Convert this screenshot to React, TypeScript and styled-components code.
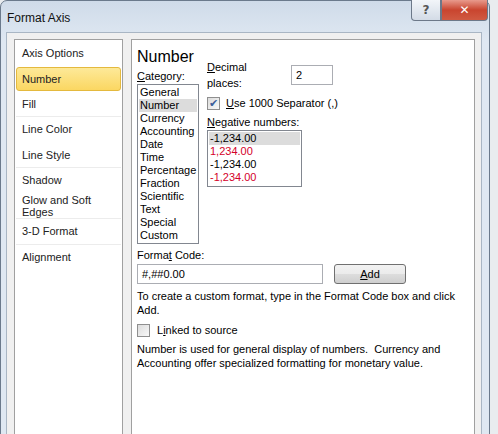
import React from "react";
import styled, { createGlobalStyle } from "styled-components";

const G = createGlobalStyle`
  body { margin:0; background:#e9ecef; font-family:"Liberation Sans",Arial,sans-serif; font-size:11px; color:#000; overflow:hidden; }
`;
const Win = styled.div`
  width:490px; height:440px; background:linear-gradient(#cfdbe9,#dfe8f2 40px,#dfe8f2);
  border:1px solid #6b7a8c; border-radius:7px 7px 0 0; box-sizing:border-box;
  display:flex; flex-direction:column; padding:0 7px 0 5px;
`;
const TitleBar = styled.div`
  height:31px; display:flex; align-items:flex-start; justify-content:space-between;
`;
const Title = styled.div` font-size:12px; padding:10px 0 0 1px; color:#111; `;
const Btns = styled.div` display:flex; margin-top:-1px; margin-right:-6px;`;
const Btn = styled.div<{ red?: boolean }>`
  width:${p => (p.red ? 45 : 28)}px; height:20px; border:1px solid #6c7889; border-top:none;
  border-radius:${p => (p.red ? "0 0 4px 0" : "0 0 0 4px")};
  background:${p => (p.red ? "linear-gradient(#e89a8c,#c9452f 50%,#d05a42)" : "linear-gradient(#f2f5f9,#d3dbe6)")};
  color:${p => (p.red ? "#fff" : "#555")}; font:bold 12px "DejaVu Sans",sans-serif;
  display:flex; align-items:center; justify-content:center;
`;
const Content = styled.div`
  flex:1; background:#f0f0f0; border:1px solid #a9b6c4; border-bottom:none;
  display:flex; gap:8px; padding:6px 6px 0 7px;
`;
const Nav = styled.div`
  width:113px; background:#fff; border:1px solid #a0a0a0; border-bottom:none;
  padding:1px 1px 0;
`;
const NavItem = styled.div<{ sel?: boolean; sep?: boolean }>`
  height:${p => (p.sel ? 22 : 24.5)}px; display:flex; align-items:center; padding-left:${p => (p.sel ? 5 : 6)}px;
  ${p => p.sel && "background:linear-gradient(#fde999,#fbd762); border:1px solid #e4b93e; border-radius:3px; margin:0 0 1px;"}
  border-bottom:${p => (p.sep ? "1px solid #ececec" : p.sel ? "1px solid #e4b93e" : "1px solid transparent")};
  color:#222;
`;
const Panel = styled.div`
  flex:1; background:#fff; border:1px solid #a0a0a0; border-bottom:none; padding:7px 7px 0 5px;
  display:flex; flex-direction:column;
`;
const H = styled.div` font-size:16px; line-height:20px; margin-bottom:1px; `;
const Row = styled.div` display:flex; gap:8px; `;
const Col = styled.div` display:flex; flex-direction:column; `;
const Label = styled.div` line-height:16px; `;
const List = styled.div<{ w: number }>`
  width:${p => p.w}px; border:1px solid #828790; box-sizing:border-box; padding:1px; display:flex; flex-direction:column;
`;
const LI = styled.div<{ sel?: boolean; red?: boolean }>`
  line-height:13px; padding-left:1px; background:${p => (p.sel ? "#dcdcdc" : "transparent")};
  color:${p => (p.red ? "#d4002a" : "#000")}; white-space:nowrap;
`;
const Input = styled.div<{ w: number }>`
  width:${p => p.w}px; height:20px; box-sizing:border-box; border:1px solid #abadb3; padding:0 4px;
  display:flex; align-items:center; background:#fff;
`;
const Check = styled.div<{ on?: boolean }>`
  width:13px; height:13px; box-sizing:border-box; border:1px solid #8f8f8f;
  background:linear-gradient(135deg,#dcdcdc,#f8f8f8); display:flex; align-items:center; justify-content:center;
  color:#3b5f9a; font-size:11px; font-family:"DejaVu Sans",sans-serif;
`;
const Button = styled.div`
  width:72px; height:20px; box-sizing:border-box; border:1px solid #707070; border-radius:3px;
  background:linear-gradient(#f2f2f2,#ebebeb 50%,#dddddd 51%,#cfcfcf); display:flex; align-items:center; justify-content:center;
`;
const P = styled.div` line-height:14px; `;
const U = styled.span` text-decoration:underline; `;

export default function App() {
  return (
    <>
      <G />
      <Win>
        <TitleBar>
          <Title>Format Axis</Title>
          <Btns><Btn>?</Btn><Btn red>✕</Btn></Btns>
        </TitleBar>
        <Content>
          <Nav>
            <NavItem>Axis Options</NavItem>
            <NavItem sel>Number</NavItem>
            <NavItem sep>Fill</NavItem>
            <NavItem>Line Color</NavItem>
            <NavItem sep>Line Style</NavItem>
            <NavItem>Shadow</NavItem>
            <NavItem sep>Glow and Soft Edges</NavItem>
            <NavItem sep>3-D Format</NavItem>
            <NavItem>Alignment</NavItem>
          </Nav>
          <Panel>
            <H>Number</H>
            <Row>
              <Col>
                <Label><U>C</U>ategory:</Label>
                <List w={62}>
                  {["General","Number","Currency","Accounting","Date","Time","Percentage","Fraction","Scientific","Text","Special","Custom"].map(c=>(
                    <LI key={c} sel={c==="Number"}>{c}</LI>))}
                </List>
              </Col>
              <Col style={{ marginTop: -9 }}>
                <Row style={{ alignItems: "center", gap: 10 }}>
                  <Label style={{ width: 74 }}><U>D</U>ecimal places:</Label>
                  <Input w={42}>2</Input>
                </Row>
                <Row style={{ alignItems: "center", gap: 6, marginTop: 4 }}>
                  <Check on>✔</Check><Label><U>U</U>se 1000 Separator (,)</Label>
                </Row>
                <Label style={{ marginTop: 3 }}><U>N</U>egative numbers:</Label>
                <List w={95} style={{ height: 57 }}>
                  <LI sel>-1,234.00</LI>
                  <LI red>1,234.00</LI>
                  <LI>-1,234.00</LI>
                  <LI red>-1,234.00</LI>
                </List>
              </Col>
            </Row>
            <Label style={{ marginTop: 3 }}>Forma<U>t</U> Code:</Label>
            <Row style={{ gap: 11, alignItems: "center", marginTop: 1 }}>
              <Input w={186}>#,##0.00</Input>
              <Button><U>A</U>dd</Button>
            </Row>
            <P style={{ marginTop: 5, width: 330 }}>To create a custom format, type in the Format Code box and click Add.</P>
            <Row style={{ gap: 7, alignItems: "center", marginTop: 5 }}>
              <Check /><Label>L<U>i</U>nked to source</Label>
            </Row>
            <P style={{ marginTop: 4, width: 320 }}>Number is used for general display of numbers.&nbsp; Currency and Accounting offer specialized formatting for monetary value.</P>
          </Panel>
        </Content>
      </Win>
    </>
  );
}
